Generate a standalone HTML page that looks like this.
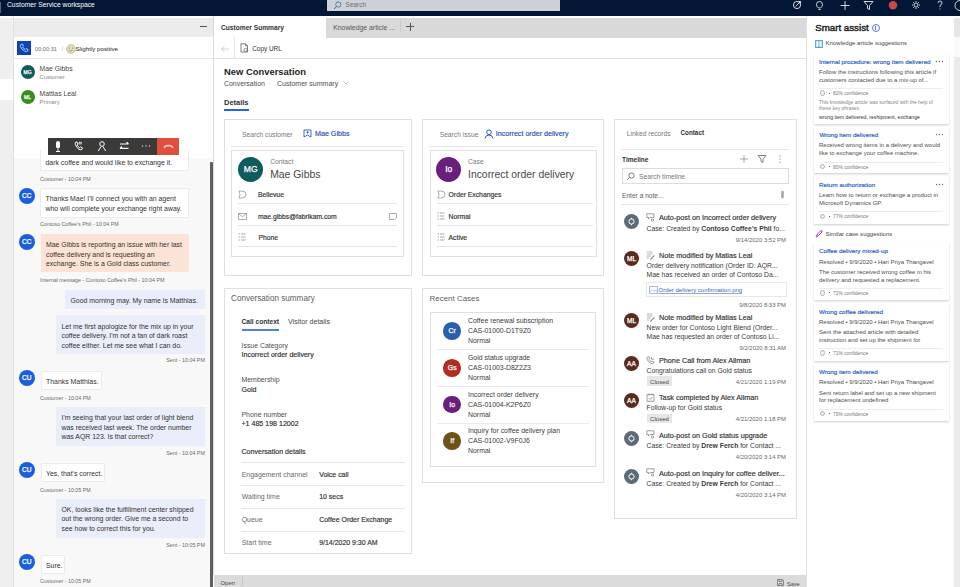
<!DOCTYPE html>
<html><head><meta charset="utf-8">
<style>
*{margin:0;padding:0;box-sizing:border-box}
html,body{width:960px;height:587px;overflow:hidden;background:#fff;font-family:"Liberation Sans",sans-serif;color:#323130;position:relative}
.a{position:absolute}
.t{position:absolute;white-space:nowrap}
.b{font-weight:bold}
.s{-webkit-text-stroke:0.16px currentColor}
.r{border-radius:50%}
.av{position:absolute;border-radius:50%;color:#fff;text-align:center;white-space:nowrap;-webkit-text-stroke:0.25px #fff}
</style></head><body>
<!-- top bar -->
<div class="a" style="left:0px;top:0px;width:960px;height:16px;background:#021635;"></div>
<div class="a" style="left:0px;top:2px;width:1px;height:11px;background:#5a6478;"></div>
<div class="t" style="left:7.00px;top:-0.20px;font-size:6.752px;color:#ffffff;line-height:10px;height:10px;">Customer Service workspace</div>
<div class="a" style="left:327px;top:0px;width:233px;height:11px;background:#cdd1d6;"></div>
<svg class="a" style="left:333px;top:1px" width="9" height="9" viewBox="0 0 9 9"><circle cx="5.3" cy="3.6" r="2.6" fill="none" stroke="#3d64a8" stroke-width="0.8"/><path d="M3.4 5.5 L1 8" stroke="#3d64a8" stroke-width="0.9"/></svg>
<div class="t" style="left:345.60px;top:0.30px;font-size:6.449px;color:#676b72;line-height:10px;height:10px;">Search</div>
<svg class="a" style="left:788px;top:0px" width="172" height="14" viewBox="0 0 172 14"><g fill="none" stroke="#e8ebf0" stroke-width="0.9">
  <circle cx="9" cy="5" r="3.6"/><path d="M7.5 6.5 L12.5 1.5 M10.5 1.5 H12.5 V3.5"/>
  <path d="M30.5 8 Q28.5 6.5 28.5 4.5 Q28.5 1.5 31.5 1.5 Q34.5 1.5 34.5 4.5 Q34.5 6.5 32.5 8Z M30.5 9.5 H32.5"/>
  <path d="M57 1 V10 M52.5 5.5 H61.5"/>
  <path d="M76 1.5 H85 L81.5 5.5 V9.5 L79.5 8.5 V5.5Z"/>
  <circle cx="128" cy="5" r="2"/><path d="M128 1 V2.2 M128 7.8 V9 M124 5 H125.2 M130.8 5 H132 M125.2 2.2 L126 3 M130 7 L130.8 7.8 M125.2 7.8 L126 7 M130 3 L130.8 2.2"/>
  <path d="M150 3 Q150 1 152 1 Q154 1 154 3 Q154 4.5 152 5.5 V7 M152 8.5 V9.5"/>
  <circle cx="172" cy="5.5" r="5"/>
 </g>
 <circle cx="105" cy="5.2" r="4.2" fill="#c94848"/></svg>
<!-- left strip -->
<div class="a" style="left:0px;top:18px;width:13px;height:569px;background:#efefef;"></div>
<div class="a" style="left:0px;top:79px;width:13px;height:21px;background:#ffffff;"></div>
<div class="a" style="left:13px;top:16px;width:1px;height:571px;background:#e0e0e0;"></div>
<!-- left panel -->
<div class="a" style="left:14px;top:18px;width:200px;height:19.5px;background:#ebebeb;"></div>
<div class="a" style="left:14px;top:37px;width:199px;height:121px;background:#ffffff;"></div>
<div class="a" style="left:14px;top:58px;width:199px;height:1px;background:#e9e9e9;"></div>
<div class="a" style="left:14px;top:158px;width:199px;height:429px;background:#f8f8f8;"></div>
<div class="a" style="left:200px;top:26px;width:7px;height:1px;background:#505050;"></div>
<div class="a" style="left:17px;top:41px;width:14px;height:14px;background:#0d45b8;"></div>
<svg class="a" style="left:19px;top:43px" width="10" height="10" viewBox="0 0 10 10"><path d="M2.2 1.2 L3.6 1 L4.4 3 L3.5 3.8 Q4.3 5.6 6.2 6.5 L7 5.6 L9 6.4 L8.8 7.8 Q7.8 9 5.8 8.2 Q2.5 6.6 1.4 3.6 Q1 2 2.2 1.2Z" fill="none" stroke="#dfe8fb" stroke-width="0.8"/></svg>
<div class="t" style="left:35.00px;top:44.20px;font-size:5.656px;color:#6f6d6b;line-height:10px;height:10px;">00:00:31</div>
<div class="a" style="left:62px;top:46px;width:0.8px;height:5px;background:#dedede;"></div>
<svg class="a" style="left:65.5px;top:43.5px" width="10" height="10" viewBox="0 0 10 10"><circle cx="5" cy="5" r="4.3" fill="#e4e0b8" stroke="#b8b27c" stroke-width="0.8"/><circle cx="3.5" cy="4" r="0.6" fill="#7a7550"/><circle cx="6.5" cy="4" r="0.6" fill="#7a7550"/><path d="M3.2 6.2 Q5 7.6 6.8 6.2" fill="none" stroke="#7a7550" stroke-width="0.6"/></svg>
<div class="t" style="left:75.50px;top:44.00px;font-size:6.185px;color:#252423;line-height:10px;height:10px;">Slightly positive</div>
<div class="av" style="left:20.60px;top:65.00px;width:14px;height:14px;background:#0f5b5d;font-size:5px;line-height:14px">MG</div>
<div class="t" style="left:39.60px;top:63.70px;font-size:6.826px;color:#484644;line-height:10px;height:10px;">Mae Gibbs</div>
<div class="t" style="left:39.60px;top:72.00px;font-size:5.800px;color:#8a8886;line-height:10px;height:10px;">Customer</div>
<div class="av" style="left:20.60px;top:89.70px;width:14px;height:14px;background:#3a8c1f;font-size:5px;line-height:14px">ML</div>
<div class="t" style="left:39.60px;top:88.70px;font-size:6.826px;color:#484644;line-height:10px;height:10px;">Mattias Leal</div>
<div class="t" style="left:39.60px;top:96.90px;font-size:5.800px;color:#8a8886;line-height:10px;height:10px;">Primary</div>
<!-- chat -->
<div class="a" style="left:210px;top:162px;width:2.7px;height:425px;background:#606060;border-radius:1.3px 1.3px 0 0"></div>
<div class="a" style="left:40px;top:150px;width:149px;height:21.3px;background:#ffffff;border:1px solid #ebebeb;border-top:none;border-radius:1px"></div>
<div class="t" style="left:45.50px;top:157.70px;font-size:6.927px;color:#323130;line-height:10px;height:10px;">dark coffee and would like to exchange it.</div>
<div class="t" style="left:40.00px;top:173.70px;font-size:5.355px;color:#6b6967;line-height:10px;height:10px;">Customer - 10:04 PM</div>
<div class="a" style="left:40px;top:188px;width:149px;height:29.5px;background:#ffffff;border:1px solid #ebebeb;border-radius:1px"></div>
<div class="t" style="left:45.50px;top:194.40px;font-size:6.927px;color:#323130;line-height:10px;height:10px;">Thanks Mae! I'll connect you with an agent</div>
<div class="t" style="left:45.50px;top:203.70px;font-size:6.927px;color:#323130;line-height:10px;height:10px;">who will complete your exchange right away.</div>
<div class="t" style="left:40.00px;top:219.00px;font-size:5.355px;color:#6b6967;line-height:10px;height:10px;">Contoso Coffee's Phil - 10:04 PM</div>
<div class="av" style="left:18.80px;top:187.80px;width:16px;height:16px;background:#1a5ee0;font-size:6.6px;line-height:16px">CC</div>
<div class="a" style="left:40.5px;top:233.6px;width:148.5px;height:38.7px;background:#fde3d5;border-radius:1px"></div>
<div class="t" style="left:46.00px;top:239.90px;font-size:6.927px;color:#323130;line-height:10px;height:10px;">Mae Gibbs is reporting an issue with her last</div>
<div class="t" style="left:46.00px;top:249.60px;font-size:6.927px;color:#323130;line-height:10px;height:10px;">coffee delivery and is requesting an</div>
<div class="t" style="left:46.00px;top:259.20px;font-size:6.927px;color:#323130;line-height:10px;height:10px;">exchange. She is a Gold class customer.</div>
<div class="t" style="left:40.00px;top:274.90px;font-size:5.355px;color:#6b6967;line-height:10px;height:10px;">Internal message - Contoso Coffee's Phil - 10:04 PM</div>
<div class="av" style="left:18.80px;top:233.50px;width:16px;height:16px;background:#1a5ee0;font-size:6.6px;line-height:16px">CC</div>
<div class="a" style="left:65px;top:289.8px;width:139.5px;height:19.7px;background:#e9eefa;border-radius:1px"></div>
<div class="t" style="left:70.50px;top:295.50px;font-size:6.927px;color:#323130;line-height:10px;height:10px;">Good morning may. My name is Matthias.</div>
<div class="a" style="left:56px;top:315.1px;width:148.5px;height:38.6px;background:#e9eefa;border-radius:1px"></div>
<div class="t" style="left:61.50px;top:321.70px;font-size:6.927px;color:#323130;line-height:10px;height:10px;">Let me first apologize for the mix up in your</div>
<div class="t" style="left:61.50px;top:331.10px;font-size:6.927px;color:#323130;line-height:10px;height:10px;">coffee delivery. I'm not a fan of dark roast</div>
<div class="t" style="left:61.50px;top:340.50px;font-size:6.927px;color:#323130;line-height:10px;height:10px;">coffee either. Let me see what I can do.</div>
<div class="t" style="left:4.90px;width:200px;text-align:right;top:355.30px;font-size:5.355px;color:#6b6967;line-height:10px;height:10px;">Sent - 10:04 PM</div>
<div class="a" style="left:40.5px;top:370.5px;width:61.9px;height:19.7px;background:#ffffff;border:1px solid #ebebeb;border-radius:1px"></div>
<div class="t" style="left:46.00px;top:376.80px;font-size:6.927px;color:#323130;line-height:10px;height:10px;">Thanks Matthias.</div>
<div class="t" style="left:40.00px;top:392.70px;font-size:5.355px;color:#6b6967;line-height:10px;height:10px;">Customer - 10:04 PM</div>
<div class="av" style="left:18.80px;top:370.00px;width:16px;height:16px;background:#1a5ee0;font-size:6.6px;line-height:16px">CU</div>
<div class="a" style="left:56px;top:407px;width:148.5px;height:38.6px;background:#e9eefa;border-radius:1px"></div>
<div class="t" style="left:61.50px;top:413.40px;font-size:6.927px;color:#323130;line-height:10px;height:10px;">I'm seeing that your last order of light blend</div>
<div class="t" style="left:61.50px;top:422.70px;font-size:6.927px;color:#323130;line-height:10px;height:10px;">was received last week. The order number</div>
<div class="t" style="left:61.50px;top:432.20px;font-size:6.927px;color:#323130;line-height:10px;height:10px;">was AQR 123. Is that correct?</div>
<div class="t" style="left:4.90px;width:200px;text-align:right;top:448.20px;font-size:5.355px;color:#6b6967;line-height:10px;height:10px;">Sent - 10:04 PM</div>
<div class="a" style="left:40.5px;top:462.9px;width:64.7px;height:19.1px;background:#ffffff;border:1px solid #ebebeb;border-radius:1px"></div>
<div class="t" style="left:46.00px;top:468.70px;font-size:6.927px;color:#323130;line-height:10px;height:10px;">Yes, that's correct.</div>
<div class="t" style="left:40.00px;top:484.70px;font-size:5.355px;color:#6b6967;line-height:10px;height:10px;">Customer - 10:05 PM</div>
<div class="av" style="left:18.80px;top:462.00px;width:16px;height:16px;background:#1a5ee0;font-size:6.6px;line-height:16px">CU</div>
<div class="a" style="left:56px;top:498.7px;width:148.5px;height:39.1px;background:#e9eefa;border-radius:1px"></div>
<div class="t" style="left:61.50px;top:504.70px;font-size:6.927px;color:#323130;line-height:10px;height:10px;">OK, looks like the fulfillment center shipped</div>
<div class="t" style="left:61.50px;top:514.30px;font-size:6.927px;color:#323130;line-height:10px;height:10px;">out the wrong order. Give me a second to</div>
<div class="t" style="left:61.50px;top:523.70px;font-size:6.927px;color:#323130;line-height:10px;height:10px;">see how to correct this for you.</div>
<div class="t" style="left:4.90px;width:200px;text-align:right;top:539.70px;font-size:5.355px;color:#6b6967;line-height:10px;height:10px;">Sent - 10:05 PM</div>
<div class="a" style="left:40.5px;top:554.7px;width:24.5px;height:19.5px;background:#ffffff;border:1px solid #ebebeb;border-radius:1px"></div>
<div class="t" style="left:46.00px;top:560.70px;font-size:6.927px;color:#323130;line-height:10px;height:10px;">Sure.</div>
<div class="t" style="left:40.00px;top:576.30px;font-size:5.355px;color:#6b6967;line-height:10px;height:10px;">Customer - 10:05 PM</div>
<div class="av" style="left:18.80px;top:554.00px;width:16px;height:16px;background:#1a5ee0;font-size:6.6px;line-height:16px">CU</div>
<!-- call toolbar -->
<div class="a" style="left:48px;top:138px;width:109px;height:16.5px;background:#3b3a39;"></div>
<div class="a" style="left:157px;top:138px;width:22.2px;height:16.5px;background:#e04f3d;"></div>
<svg class="a" style="left:48px;top:138px" width="132" height="16" viewBox="0 0 132 16"><g fill="none" stroke="#fff" stroke-width="1">
  <path d="M10 11 V13.5 M8 13.5 H12"/>
  <path d="M27.5 4.3 L29 4 L30 6.2 L29.1 7 Q29.8 8.8 31.5 9.6 L32.3 8.8 L34.3 9.7 L34.1 11.2 Q33 12.3 31 11.3 Q28.2 9.6 27.3 6.3 Q27.1 5 27.5 4.3Z"/>
  <path d="M31.5 3.5 V6.5 M33 3.5 V6.5 M30.5 4.5 H34 M30.5 5.8 H34" stroke-width="0.5"/>
  <circle cx="54" cy="6" r="2.3"/><path d="M50.3 13 L53 8.6 M57.7 13 L55 8.6"/>
  <path d="M72 6 H80.5 M78.5 4.2 L80.5 6 M72 10.3 H80.5 M74 8.5 L72 10.3" stroke-width="1.2"/>
 </g>
 <rect x="8" y="3" width="4" height="7.5" rx="2" fill="#fff"/>
 <circle cx="94.5" cy="8" r="0.7" fill="#ddd"/><circle cx="98" cy="8" r="0.7" fill="#ddd"/><circle cx="101.5" cy="8" r="0.7" fill="#ddd"/>
 <path d="M115.5 9.8 Q115.5 6.8 120.5 6.8 Q125.5 6.8 125.5 9.8 L123.8 10.3 L123.2 8.8 Q120.5 8.2 117.8 8.8 L117.2 10.3Z" fill="#f5c4bb"/></svg>
<!-- center -->
<div class="a" style="left:213px;top:16px;width:1px;height:559px;background:#d9d9d9;"></div>
<div class="a" style="left:326px;top:17.5px;width:481px;height:20px;background:#d9d9d9;"></div>
<div class="t b" style="left:221.00px;top:23.10px;font-size:6.646px;color:#323130;line-height:10px;height:10px;">Customer Summary</div>
<div class="t" style="left:333.20px;top:23.20px;font-size:6.878px;color:#5a5856;line-height:10px;height:10px;">Knowledge article ...</div>
<div class="a" style="left:400px;top:21px;width:1px;height:11px;background:#cccccc;"></div>
<div class="a" style="left:406px;top:26.2px;width:8px;height:0.8px;background:#555555;"></div>
<div class="a" style="left:409.6px;top:22.5px;width:0.8px;height:8px;background:#555555;"></div>
<div class="a" style="left:214px;top:58px;width:593px;height:1px;background:#e0e0e0;"></div>
<div class="a" style="left:234px;top:37px;width:1px;height:21px;background:#e6e6e6;"></div>
<svg class="a" style="left:220px;top:44.5px" width="10" height="8" viewBox="0 0 10 8"><path d="M9 4 H1.5 M4.5 1 L1.5 4 L4.5 7" fill="none" stroke="#c8c6c4" stroke-width="0.8"/></svg>
<svg class="a" style="left:240px;top:43px" width="9" height="10" viewBox="0 0 9 10"><path d="M1 0.8 H5.5 L7.5 2.8 V9 H1Z M5.5 0.8 V2.8 H7.5" fill="none" stroke="#605e5c" stroke-width="0.8"/><circle cx="5.5" cy="7" r="1.6" fill="#fff" stroke="#605e5c" stroke-width="0.7"/></svg>
<div class="t" style="left:252.20px;top:44.10px;font-size:6.425px;color:#323130;line-height:10px;height:10px;">Copy URL</div>
<div class="t b" style="left:224.00px;top:65.80px;font-size:9.420px;color:#201f1e;line-height:12px;height:12px;">New Conversation</div>
<div class="t" style="left:224.00px;top:78.50px;font-size:6.946px;color:#4f4d4b;line-height:10px;height:10px;">Conversation</div>
<div class="t" style="left:268.50px;top:78.50px;font-size:6.800px;color:#a19f9d;line-height:10px;height:10px;">&middot;</div>
<div class="t" style="left:277.00px;top:78.50px;font-size:7.032px;color:#4f4d4b;line-height:10px;height:10px;">Customer summary</div>
<svg class="a" style="left:342.5px;top:81px" width="6" height="4" viewBox="0 0 6 4"><path d="M0.5 0.5 L3 3 L5.5 0.5" fill="none" stroke="#a19f9d" stroke-width="0.7"/></svg>
<div class="t b" style="left:224.00px;top:98.10px;font-size:7.476px;color:#323130;line-height:10px;height:10px;">Details</div>
<div class="a" style="left:224px;top:108.5px;width:24.5px;height:2px;background:#2266e3;"></div>
<!-- customer card -->
<div class="a" style="left:224px;top:119px;width:188px;height:157px;border:1px solid #e1dfdd;background:#fff;"></div>
<div class="t" style="left:242.00px;top:129.50px;font-size:6.690px;color:#797775;line-height:10px;height:10px;">Search customer</div>
<svg class="a" style="left:303px;top:129px" width="9" height="9" viewBox="0 0 9 9"><path d="M1 1 H8 V8 L4.5 6 L1 8Z" fill="none" stroke="#2b5ac8" stroke-width="0.9"/><circle cx="4.5" cy="3.3" r="1.1" fill="#2b5ac8"/></svg>
<div class="t s" style="left:315.00px;top:129.30px;font-size:7.135px;color:#1f4fb4;line-height:10px;height:10px;">Mae Gibbs</div>
<div class="a" style="left:231px;top:145.5px;width:173px;height:1px;background:#e6e6e6;"></div>
<div class="a" style="left:231px;top:149.5px;width:173px;height:107px;border:1px solid #e1dfdd;background:transparent;"></div>
<div class="av" style="left:238.40px;top:157.10px;width:24.8px;height:24.8px;background:#0f5b5d;font-size:8.6px;line-height:24.8px">MG</div>
<div class="t" style="left:270.20px;top:156.70px;font-size:6.719px;color:#797775;line-height:10px;height:10px;">Contact</div>
<div class="t" style="left:270.20px;top:169.00px;font-size:10.403px;color:#484644;line-height:12px;height:12px;">Mae Gibbs</div>
<svg class="a" style="left:238px;top:190px" width="9" height="9" viewBox="0 0 9 9"><path d="M1 1 H4 Q8 1 8 4.5 Q8 8 4 8 H1 M1 1 Q3 4.5 1 8" fill="none" stroke="#8a8886" stroke-width="0.7"/></svg>
<div class="t s" style="left:257.90px;top:190.20px;font-size:6.795px;color:#323130;line-height:10px;height:10px;">Bellevue</div>
<div class="a" style="left:238px;top:202.5px;width:159px;height:1px;background:#e6e6e6;"></div>
<svg class="a" style="left:238px;top:212.5px" width="9" height="7" viewBox="0 0 9 7"><path d="M0.5 0.5 H8.5 V6.5 H0.5Z M0.5 0.5 L4.5 3.8 L8.5 0.5" fill="none" stroke="#8a8886" stroke-width="0.7"/></svg>
<div class="t s" style="left:257.90px;top:211.70px;font-size:6.795px;color:#323130;line-height:10px;height:10px;">mae.gibbs@fabrikam.com</div>
<svg class="a" style="left:389px;top:212.5px" width="8" height="7" viewBox="0 0 8 7"><path d="M0.5 0.5 H7.5 V4.5 L5 6.5 H0.5Z" fill="none" stroke="#8a8886" stroke-width="0.7"/></svg>
<div class="a" style="left:238px;top:224.5px;width:159px;height:1px;background:#e6e6e6;"></div>
<svg class="a" style="left:238px;top:233px" width="8" height="8" viewBox="0 0 8 8"><path d="M0.5 1 H2 M3 1 H7.5 M0.5 4 H2 M3 4 H7.5 M0.5 7 H2 M3 7 H6" fill="none" stroke="#8a8886" stroke-width="0.7"/><path d="M5.5 6.5 L6.5 7.5 L7.8 5.8" fill="none" stroke="#8a8886" stroke-width="0.6"/></svg>
<div class="t s" style="left:258.50px;top:233.20px;font-size:6.795px;color:#323130;line-height:10px;height:10px;">Phone</div>
<div class="a" style="left:238px;top:245.5px;width:159px;height:1px;background:#e6e6e6;"></div>
<!-- issue card -->
<div class="a" style="left:422px;top:119px;width:182px;height:157px;border:1px solid #e1dfdd;background:#fff;"></div>
<div class="t" style="left:439.70px;top:129.50px;font-size:6.690px;color:#797775;line-height:10px;height:10px;">Search issue</div>
<svg class="a" style="left:483.5px;top:128.5px" width="10" height="10" viewBox="0 0 10 10"><circle cx="5" cy="3.3" r="2.3" fill="none" stroke="#2b5ac8" stroke-width="1"/><path d="M1 9.5 Q1.5 6 5 6 Q8.5 6 9 9.5" fill="none" stroke="#2b5ac8" stroke-width="1"/></svg>
<div class="t s" style="left:495.70px;top:129.10px;font-size:7.135px;color:#1f4fb4;line-height:10px;height:10px;">Incorrect order delivery</div>
<div class="a" style="left:429px;top:145.5px;width:167px;height:1px;background:#e6e6e6;"></div>
<div class="a" style="left:429.5px;top:149.5px;width:167px;height:107px;border:1px solid #e1dfdd;background:transparent;"></div>
<div class="av" style="left:436.40px;top:157.00px;width:24.8px;height:24.8px;background:#6b1f7c;font-size:8.4px;line-height:24.8px">Io</div>
<div class="t" style="left:468.00px;top:156.60px;font-size:6.719px;color:#797775;line-height:10px;height:10px;">Case</div>
<div class="t" style="left:468.00px;top:169.00px;font-size:10.403px;color:#484644;line-height:12px;height:12px;">Incorrect order delivery</div>
<svg class="a" style="left:436.5px;top:190px" width="9" height="9" viewBox="0 0 9 9"><path d="M1 1 H4 Q8 1 8 4.5 Q8 8 4 8 H1 M1 1 Q3 4.5 1 8" fill="none" stroke="#8a8886" stroke-width="0.7"/></svg>
<div class="t s" style="left:448.60px;top:190.20px;font-size:6.795px;color:#323130;line-height:10px;height:10px;">Order Exchanges</div>
<div class="a" style="left:436.5px;top:202.5px;width:156.5px;height:1px;background:#e6e6e6;"></div>
<svg class="a" style="left:436.5px;top:212px" width="8" height="8" viewBox="0 0 8 8"><path d="M0.5 1 H2 M3 1 H7.5 M0.5 4 H2 M3 4 H7.5 M0.5 7 H2 M3 7 H6" fill="none" stroke="#8a8886" stroke-width="0.7"/><path d="M5.5 6.5 L6.5 7.5 L7.8 5.8" fill="none" stroke="#8a8886" stroke-width="0.6"/></svg>
<div class="t s" style="left:448.60px;top:211.90px;font-size:6.795px;color:#323130;line-height:10px;height:10px;">Normal</div>
<div class="a" style="left:436.5px;top:224.5px;width:156.5px;height:1px;background:#e6e6e6;"></div>
<svg class="a" style="left:436.5px;top:233px" width="8" height="8" viewBox="0 0 8 8"><path d="M0.5 1 H2 M3 1 H7.5 M0.5 4 H2 M3 4 H7.5 M0.5 7 H2 M3 7 H6" fill="none" stroke="#8a8886" stroke-width="0.7"/><path d="M5.5 6.5 L6.5 7.5 L7.8 5.8" fill="none" stroke="#8a8886" stroke-width="0.6"/></svg>
<div class="t s" style="left:448.60px;top:233.20px;font-size:6.795px;color:#323130;line-height:10px;height:10px;">Active</div>
<div class="a" style="left:436.5px;top:245.5px;width:156.5px;height:1px;background:#e6e6e6;"></div>
<!-- conversation summary -->
<div class="a" style="left:224px;top:288px;width:188px;height:266px;border:1px solid #e1dfdd;background:#fff;"></div>
<div class="t" style="left:231.00px;top:293.70px;font-size:8.152px;color:#605e5c;line-height:10px;height:10px;">Conversation summary</div>
<div class="t b" style="left:241.50px;top:316.70px;font-size:6.630px;color:#323130;line-height:10px;height:10px;">Call context</div>
<div class="a" style="left:241.5px;top:329px;width:37.5px;height:1.5px;background:#4f7fd6;"></div>
<div class="t" style="left:288.00px;top:316.70px;font-size:7.097px;color:#484644;line-height:10px;height:10px;">Visitor details</div>
<div class="t" style="left:241.50px;top:340.70px;font-size:6.933px;color:#4f4d4b;line-height:10px;height:10px;">Issue Category</div>
<div class="t s" style="left:241.50px;top:350.20px;font-size:7.073px;color:#323130;line-height:10px;height:10px;">Incorrect order delivery</div>
<div class="t" style="left:241.50px;top:375.40px;font-size:6.933px;color:#4f4d4b;line-height:10px;height:10px;">Membership</div>
<div class="t s" style="left:241.50px;top:384.70px;font-size:7.073px;color:#323130;line-height:10px;height:10px;">Gold</div>
<div class="t" style="left:241.50px;top:410.10px;font-size:6.933px;color:#4f4d4b;line-height:10px;height:10px;">Phone number</div>
<div class="t s" style="left:241.50px;top:419.40px;font-size:7.073px;color:#323130;line-height:10px;height:10px;">+1 485 198 12002</div>
<div class="t s" style="left:241.50px;top:447.40px;font-size:7.073px;color:#323130;line-height:10px;height:10px;">Conversation details</div>
<div class="a" style="left:241px;top:462.3px;width:164px;height:1px;background:#e6e6e6;"></div>
<div class="t" style="left:241.70px;top:469.50px;font-size:6.971px;color:#6b6967;line-height:10px;height:10px;">Engagement channel</div>
<div class="t s" style="left:319.20px;top:469.50px;font-size:6.965px;color:#323130;line-height:10px;height:10px;">Voice call</div>
<div class="a" style="left:241px;top:485.1px;width:164px;height:1px;background:#e6e6e6;"></div>
<div class="t" style="left:241.70px;top:492.30px;font-size:6.971px;color:#6b6967;line-height:10px;height:10px;">Waiting time</div>
<div class="t s" style="left:319.20px;top:492.30px;font-size:6.965px;color:#323130;line-height:10px;height:10px;">10 secs</div>
<div class="a" style="left:241px;top:507.9px;width:164px;height:1px;background:#e6e6e6;"></div>
<div class="t" style="left:241.70px;top:515.10px;font-size:6.971px;color:#6b6967;line-height:10px;height:10px;">Queue</div>
<div class="t s" style="left:319.20px;top:515.10px;font-size:6.965px;color:#323130;line-height:10px;height:10px;">Coffee Order Exchange</div>
<div class="a" style="left:241px;top:530.9px;width:164px;height:1px;background:#e6e6e6;"></div>
<div class="t" style="left:241.70px;top:538.10px;font-size:6.971px;color:#6b6967;line-height:10px;height:10px;">Start time</div>
<div class="t s" style="left:319.20px;top:538.10px;font-size:6.965px;color:#323130;line-height:10px;height:10px;">9/14/2020 9:30 AM</div>
<!-- recent cases -->
<div class="a" style="left:422px;top:288px;width:182px;height:195px;border:1px solid #e1dfdd;background:#fff;"></div>
<div class="t" style="left:429.60px;top:293.70px;font-size:7.958px;color:#605e5c;line-height:10px;height:10px;">Recent Cases</div>
<div class="a" style="left:429.6px;top:311.7px;width:166.5px;height:155px;border:1px solid #e1dfdd;background:transparent;"></div>
<div class="av" style="left:443.40px;top:322.00px;width:17.6px;height:17.6px;background:#2b5fad;font-size:6.9px;line-height:17.6px">Cr</div>
<div class="t" style="left:468.00px;top:316.20px;font-size:6.913px;color:#3b3a39;line-height:10px;height:10px;">Coffee renewal subscription</div>
<div class="t" style="left:468.00px;top:326.00px;font-size:6.913px;color:#3b3a39;line-height:10px;height:10px;">CAS-01000-D1T9Z0</div>
<div class="t" style="left:468.00px;top:335.70px;font-size:6.913px;color:#3b3a39;line-height:10px;height:10px;">Normal</div>
<div class="a" style="left:437px;top:349.0px;width:152px;height:1px;background:#ebebeb;"></div>
<div class="av" style="left:443.40px;top:359.20px;width:17.6px;height:17.6px;background:#b02d20;font-size:6.9px;line-height:17.6px">Gs</div>
<div class="t" style="left:468.00px;top:353.40px;font-size:6.913px;color:#3b3a39;line-height:10px;height:10px;">Gold status upgrade</div>
<div class="t" style="left:468.00px;top:363.20px;font-size:6.913px;color:#3b3a39;line-height:10px;height:10px;">CAS-01003-D8Z2Z3</div>
<div class="t" style="left:468.00px;top:372.90px;font-size:6.913px;color:#3b3a39;line-height:10px;height:10px;">Normal</div>
<div class="a" style="left:437px;top:386.2px;width:152px;height:1px;background:#ebebeb;"></div>
<div class="av" style="left:443.40px;top:395.80px;width:17.6px;height:17.6px;background:#6b1f7c;font-size:6.9px;line-height:17.6px">Io</div>
<div class="t" style="left:468.00px;top:390.00px;font-size:6.913px;color:#3b3a39;line-height:10px;height:10px;">Incorrect order delivery</div>
<div class="t" style="left:468.00px;top:399.80px;font-size:6.913px;color:#3b3a39;line-height:10px;height:10px;">CAS-01004-K2P6Z0</div>
<div class="t" style="left:468.00px;top:409.50px;font-size:6.913px;color:#3b3a39;line-height:10px;height:10px;">Normal</div>
<div class="a" style="left:437px;top:422.8px;width:152px;height:1px;background:#ebebeb;"></div>
<div class="av" style="left:443.40px;top:432.00px;width:17.6px;height:17.6px;background:#6b5418;font-size:6.9px;line-height:17.6px">If</div>
<div class="t" style="left:468.00px;top:426.20px;font-size:6.913px;color:#3b3a39;line-height:10px;height:10px;">Inquiry for coffee delivery plan</div>
<div class="t" style="left:468.00px;top:436.00px;font-size:6.913px;color:#3b3a39;line-height:10px;height:10px;">CAS-01002-V9F0J6</div>
<div class="t" style="left:468.00px;top:445.70px;font-size:6.913px;color:#3b3a39;line-height:10px;height:10px;">Normal</div>
<!-- timeline -->
<div class="a" style="left:614px;top:119px;width:182.5px;height:399.5px;border:1px solid #e1dfdd;background:#fff;"></div>
<div class="t" style="left:626.70px;top:128.70px;font-size:6.690px;color:#797775;line-height:10px;height:10px;">Linked records</div>
<div class="t b" style="left:680.50px;top:128.20px;font-size:6.325px;color:#323130;line-height:10px;height:10px;">Contact</div>
<div class="a" style="left:621px;top:149px;width:168px;height:1px;background:#e6e6e6;"></div>
<div class="t b" style="left:622.00px;top:154.70px;font-size:6.567px;color:#323130;line-height:10px;height:10px;">Timeline</div>
<svg class="a" style="left:739px;top:154px" width="50" height="10" viewBox="0 0 50 10"><path d="M5 1 V9 M1 5 H9" stroke="#707070" stroke-width="0.6"/><path d="M19 1.5 H27 L24 5 V8.5 L22 7.5 V5Z" fill="none" stroke="#605e5c" stroke-width="0.8"/><circle cx="41" cy="2" r="0.6" fill="#605e5c"/><circle cx="41" cy="5" r="0.6" fill="#605e5c"/><circle cx="41" cy="8" r="0.6" fill="#605e5c"/></svg>
<div class="a" style="left:621.5px;top:168px;width:167px;height:15.6px;border:1px solid #dcdcdc;background:transparent;"></div>
<svg class="a" style="left:626px;top:171.5px" width="9" height="9" viewBox="0 0 9 9"><circle cx="5.5" cy="3.5" r="2.6" fill="none" stroke="#605e5c" stroke-width="0.8"/><path d="M3.6 5.4 L1 8" stroke="#605e5c" stroke-width="0.8"/></svg>
<div class="t" style="left:639.00px;top:171.70px;font-size:6.690px;color:#797775;line-height:10px;height:10px;">Search timeline</div>
<div class="t" style="left:622.00px;top:190.70px;font-size:6.619px;color:#605e5c;line-height:10px;height:10px;">Enter a note...</div>
<svg class="a" style="left:780px;top:189.5px" width="5" height="10" viewBox="0 0 5 10"><rect x="1.2" y="0.8" width="2.6" height="7.6" rx="1.3" fill="#a8a8a8"/></svg>
<div class="a" style="left:621px;top:203.5px;width:168px;height:1px;background:#e6e6e6;"></div>
<div class="a r" style="left:624.0px;top:213.80px;width:15px;height:15px;background:#5d6b78"></div>
<svg class="a" style="left:627px;top:216.8px" width="9" height="9" viewBox="0 0 9 9"><circle cx="4.5" cy="4.5" r="2.6" fill="none" stroke="#fff" stroke-width="1"/><path d="M4.5 0.8 V2 M4.5 7 V8.2" stroke="#fff" stroke-width="0.9"/></svg>
<svg class="a" style="left:646px;top:213.0px" width="9" height="9" viewBox="0 0 9 9"><path d="M0.8 0.8 H8 V4.5 H4 L2.5 6 V4.5 H0.8Z" fill="none" stroke="#797775" stroke-width="0.7"/><circle cx="6.5" cy="7" r="1.2" fill="none" stroke="#797775" stroke-width="0.7"/></svg>
<div class="t s" style="left:659.00px;top:213.20px;font-size:7.243px;color:#323130;line-height:10px;height:10px;">Auto-post on Incorrect order delivery</div>
<div class="t" style="left:646.50px;top:223.70px;font-size:6.818px;color:#3b3a39;line-height:10px;height:10px;">Case: Created by <b>Contoso Coffee's Phil</b> fo...</div>
<div class="t" style="left:586.00px;width:200px;text-align:right;top:234.70px;font-size:5.957px;color:#696765;line-height:10px;height:10px;">9/14/2020 3:52 PM</div>
<div class="av" style="left:624.00px;top:251.30px;width:15px;height:15px;background:#5b2a1e;font-size:6.6px;line-height:15px">ML</div>
<svg class="a" style="left:646px;top:250.9px" width="9" height="9" viewBox="0 0 9 9"><path d="M0.8 1 H6.5 M0.8 3 H6.5 M0.8 5 H5 M0.8 7 H3.2" fill="none" stroke="#9a9896" stroke-width="0.7"/><path d="M4.2 8.6 L8.4 4.4" fill="none" stroke="#8a8886" stroke-width="1.1"/></svg>
<div class="t s" style="left:659.00px;top:251.10px;font-size:7.243px;color:#323130;line-height:10px;height:10px;">Note modified by Matias Leal</div>
<div class="t" style="left:646.50px;top:261.20px;font-size:6.818px;color:#3b3a39;line-height:10px;height:10px;">Order delivery notification (Order ID: AQR...</div>
<div class="t" style="left:646.50px;top:270.40px;font-size:6.818px;color:#3b3a39;line-height:10px;height:10px;">Mae has received an order of Contoso Da...</div>
<div class="a" style="left:646px;top:282px;width:141px;height:15px;border:1px solid #e8e8e8;background:transparent;"></div>
<svg class="a" style="left:649px;top:285.5px" width="9" height="8" viewBox="0 0 9 8"><path d="M0.5 0.5 H8.5 V7.5 H0.5Z M0.5 6 L3 3.5 L5 5.5 L6.5 4 L8.5 6" fill="none" stroke="#6f8fc8" stroke-width="0.6"/></svg>
<div class="t" style="left:658.50px;top:285.20px;font-size:6.000px;color:#3767b8;line-height:10px;height:10px;text-decoration:underline;text-decoration-color:#8fa9d8;text-decoration-thickness:0.5px">Order delivery confirmation.png</div>
<div class="t" style="left:586.00px;width:200px;text-align:right;top:300.30px;font-size:5.957px;color:#696765;line-height:10px;height:10px;">9/8/2020 8:33 PM</div>
<div class="av" style="left:624.00px;top:312.90px;width:15px;height:15px;background:#5b2a1e;font-size:6.6px;line-height:15px">ML</div>
<svg class="a" style="left:646px;top:312.5px" width="9" height="9" viewBox="0 0 9 9"><path d="M0.8 1 H6.5 M0.8 3 H6.5 M0.8 5 H5 M0.8 7 H3.2" fill="none" stroke="#9a9896" stroke-width="0.7"/><path d="M4.2 8.6 L8.4 4.4" fill="none" stroke="#8a8886" stroke-width="1.1"/></svg>
<div class="t s" style="left:659.00px;top:312.70px;font-size:7.243px;color:#323130;line-height:10px;height:10px;">Note modified by Matias Leal</div>
<div class="t" style="left:646.50px;top:323.20px;font-size:6.818px;color:#3b3a39;line-height:10px;height:10px;">New order for Contoso Light Blend (Order...</div>
<div class="t" style="left:646.50px;top:332.20px;font-size:6.818px;color:#3b3a39;line-height:10px;height:10px;">Mae has requested an order of Contoso Li...</div>
<div class="t" style="left:586.00px;width:200px;text-align:right;top:343.20px;font-size:5.957px;color:#696765;line-height:10px;height:10px;">9/2/2020 8:31 AM</div>
<div class="av" style="left:624.00px;top:356.00px;width:15px;height:15px;background:#5b2a1e;font-size:6.6px;line-height:15px">AA</div>
<svg class="a" style="left:646px;top:355.5px" width="9" height="9" viewBox="0 0 9 9"><path d="M1.5 1 L3 0.8 L3.7 2.7 L2.9 3.4 Q3.6 5 5.2 5.8 L6 5 L7.8 5.7 L7.6 7.2 Q6.6 8.2 4.8 7.4 Q2 6 1 3 Q0.8 1.8 1.5 1Z M5.5 0.8 V3.2 H8" fill="none" stroke="#797775" stroke-width="0.7"/></svg>
<div class="t s" style="left:659.00px;top:355.70px;font-size:7.243px;color:#323130;line-height:10px;height:10px;">Phone Call from Alex Allman</div>
<div class="t" style="left:646.50px;top:365.70px;font-size:6.818px;color:#3b3a39;line-height:10px;height:10px;">Congratulations call on Gold status</div>
<div class="a" style="left:646.8px;top:376.3px;width:25.3px;height:9.5px;background:#e6e6e6;"></div>
<div class="t" style="left:650.00px;top:376.70px;font-size:6.100px;color:#484644;line-height:10px;height:10px;">Closed</div>
<div class="t" style="left:586.00px;width:200px;text-align:right;top:376.70px;font-size:5.957px;color:#696765;line-height:10px;height:10px;">4/21/2020 1:19 PM</div>
<div class="av" style="left:624.00px;top:393.30px;width:15px;height:15px;background:#5b2a1e;font-size:6.6px;line-height:15px">AA</div>
<svg class="a" style="left:646px;top:393.0px" width="9" height="9" viewBox="0 0 9 9"><path d="M1 1.5 H8 V8.3 H1Z M3 0.5 V2.5 M6 0.5 V2.5 M2.8 5.3 L4 6.5 L6.3 4" fill="none" stroke="#797775" stroke-width="0.7"/></svg>
<div class="t s" style="left:659.00px;top:393.20px;font-size:7.243px;color:#323130;line-height:10px;height:10px;">Task completed by Alex Allman</div>
<div class="t" style="left:646.50px;top:402.70px;font-size:6.818px;color:#3b3a39;line-height:10px;height:10px;">Follow-up for Gold status</div>
<div class="a" style="left:646.8px;top:413.8px;width:25.3px;height:9.5px;background:#e6e6e6;"></div>
<div class="t" style="left:650.00px;top:414.20px;font-size:6.100px;color:#484644;line-height:10px;height:10px;">Closed</div>
<div class="t" style="left:586.00px;width:200px;text-align:right;top:414.20px;font-size:5.957px;color:#696765;line-height:10px;height:10px;">4/21/2020 1:18 PM</div>
<div class="a r" style="left:624.0px;top:431.00px;width:15px;height:15px;background:#5d6b78"></div>
<svg class="a" style="left:627px;top:434.0px" width="9" height="9" viewBox="0 0 9 9"><circle cx="4.5" cy="4.5" r="2.6" fill="none" stroke="#fff" stroke-width="1"/><path d="M4.5 0.8 V2 M4.5 7 V8.2" stroke="#fff" stroke-width="0.9"/></svg>
<svg class="a" style="left:646px;top:430.3px" width="9" height="9" viewBox="0 0 9 9"><path d="M0.8 0.8 H8 V4.5 H4 L2.5 6 V4.5 H0.8Z" fill="none" stroke="#797775" stroke-width="0.7"/><circle cx="6.5" cy="7" r="1.2" fill="none" stroke="#797775" stroke-width="0.7"/></svg>
<div class="t s" style="left:659.00px;top:430.50px;font-size:7.243px;color:#323130;line-height:10px;height:10px;">Auto-post on Gold status upgrade</div>
<div class="t" style="left:646.50px;top:441.30px;font-size:6.818px;color:#3b3a39;line-height:10px;height:10px;">Case: Created by <b>Drew Ferch</b> for Contact ...</div>
<div class="t" style="left:586.00px;width:200px;text-align:right;top:452.00px;font-size:5.957px;color:#696765;line-height:10px;height:10px;">4/20/2020 3:14 PM</div>
<div class="a r" style="left:624.0px;top:468.50px;width:15px;height:15px;background:#5d6b78"></div>
<svg class="a" style="left:627px;top:471.5px" width="9" height="9" viewBox="0 0 9 9"><circle cx="4.5" cy="4.5" r="2.6" fill="none" stroke="#fff" stroke-width="1"/><path d="M4.5 0.8 V2 M4.5 7 V8.2" stroke="#fff" stroke-width="0.9"/></svg>
<svg class="a" style="left:646px;top:468.4px" width="9" height="9" viewBox="0 0 9 9"><path d="M0.8 0.8 H8 V4.5 H4 L2.5 6 V4.5 H0.8Z" fill="none" stroke="#797775" stroke-width="0.7"/><circle cx="6.5" cy="7" r="1.2" fill="none" stroke="#797775" stroke-width="0.7"/></svg>
<div class="t s" style="left:659.00px;top:468.60px;font-size:7.243px;color:#323130;line-height:10px;height:10px;">Auto-post on Inquiry for coffee deliver...</div>
<div class="t" style="left:646.50px;top:479.20px;font-size:6.818px;color:#3b3a39;line-height:10px;height:10px;">Case: Created by <b>Drew Ferch</b> for Contact ...</div>
<div class="t" style="left:586.00px;width:200px;text-align:right;top:489.70px;font-size:5.957px;color:#696765;line-height:10px;height:10px;">4/20/2020 3:14 PM</div>
<!-- bottom bar -->
<div class="a" style="left:214px;top:575.3px;width:593px;height:11.7px;background:#dbdbdb;"></div>
<div class="t" style="left:220.50px;top:578.40px;font-size:5.933px;color:#484644;line-height:10px;height:10px;">Open</div>
<div class="a" style="left:242px;top:577px;width:0.8px;height:9px;background:#c4c4c4;"></div>
<svg class="a" style="left:776.5px;top:579px" width="7" height="7" viewBox="0 0 7 7"><path d="M0.5 0.5 H5.5 L6.5 1.5 V6.5 H0.5Z M2 0.5 V2.5 H5 V0.5 M2 6.5 V4.5 H5 V6.5" fill="none" stroke="#605e5c" stroke-width="0.7"/></svg>
<div class="t" style="left:787.00px;top:578.70px;font-size:5.538px;color:#484644;line-height:10px;height:10px;">Save</div>
<!-- smart assist -->
<div class="a" style="left:806px;top:16px;width:1px;height:571px;background:#e1e1e1;"></div>
<div class="a" style="left:954px;top:18px;width:6px;height:19px;background:#e6e6e6;"></div>
<div class="a" style="left:954px;top:37px;width:6px;height:20px;background:#fafafa;"></div>
<div class="a" style="left:954px;top:57px;width:6px;height:530px;background:#ebebeb;"></div>
<div class="t s" style="left:815.30px;top:22.20px;font-size:9.718px;color:#252423;line-height:12px;height:12px;-webkit-text-stroke:0.45px #252423">Smart assist</div>
<div class="a r" style="left:871.8px;top:24px;width:8px;height:8px;border:0.8px solid #4c7ad8"></div>
<div class="a" style="left:875.4px;top:27px;width:0.8px;height:3px;background:#4c7ad8;"></div>
<div class="a" style="left:875.4px;top:25.6px;width:0.8px;height:0.8px;background:#4c7ad8;"></div>
<svg class="a" style="left:815px;top:40px" width="8" height="8" viewBox="0 0 8 8"><rect x="0" y="0" width="8" height="8" fill="#56b0cc"/><rect x="1.3" y="1.2" width="2.2" height="5.6" fill="#fff"/><rect x="4.5" y="1.2" width="2.2" height="5.6" fill="#fff"/><circle cx="4" cy="7.2" r="0.5" fill="#1f4fb4"/></svg>
<div class="t" style="left:825.60px;top:38.40px;font-size:6.045px;color:#484644;line-height:10px;height:10px;">Knowledge article suggestions</div>
<div class="a" style="left:813.5px;top:53.5px;width:135px;height:70.20px;background:#fff;box-shadow:0 0.5px 2px rgba(0,0,0,0.2)"></div>
<div class="t s" style="left:819.00px;top:56.50px;font-size:6.246px;color:#2a5bc9;line-height:10px;height:10px;">Internal procedure: wrong item delivered</div>
<svg class="a" style="left:935px;top:60.0px" width="10" height="3" viewBox="0 0 10 3"><circle cx="1.5" cy="1.5" r="0.7" fill="#6b6967"/><circle cx="4.5" cy="1.5" r="0.7" fill="#6b6967"/><circle cx="7.5" cy="1.5" r="0.7" fill="#6b6967"/></svg>
<div class="t" style="left:819.00px;top:67.00px;font-size:5.971px;color:#504e4c;line-height:10px;height:10px;">Follow the instructions following this article if</div>
<div class="t" style="left:819.00px;top:75.00px;font-size:5.971px;color:#504e4c;line-height:10px;height:10px;">customers contacted due to a mix-up of...</div>
<div class="a" style="left:819px;top:88.2px;width:124px;height:1px;background:#ededed;"></div>
<div class="a r" style="left:819.5px;top:90.40px;width:5.5px;height:5.5px;border:0.6px solid #b5b3b1;background:#f0f0f0"></div>
<div class="a" style="left:828.5px;top:92.5px;width:1px;height:1px;background:#605e5c;"></div>
<div class="t" style="left:833.00px;top:88.20px;font-size:4.980px;color:#797775;line-height:10px;height:10px;">82% confidence</div>
<div class="t" style="left:819.00px;top:97.50px;font-size:4.941px;color:#8a8886;line-height:10px;height:10px;">This knowledge article was surfaced with the help of</div>
<div class="t" style="left:819.00px;top:103.70px;font-size:4.941px;color:#8a8886;line-height:10px;height:10px;">these key phrases</div>
<div class="t" style="left:819.00px;top:112.00px;font-size:5.155px;color:#323130;line-height:10px;height:10px;">wrong item delivered, reshipment, exchange</div>
<div class="a" style="left:813.5px;top:126.5px;width:135px;height:46.50px;background:#fff;box-shadow:0 0.5px 2px rgba(0,0,0,0.2)"></div>
<div class="t s" style="left:819.40px;top:129.60px;font-size:6.246px;color:#2a5bc9;line-height:10px;height:10px;">Wrong item delivered</div>
<svg class="a" style="left:935px;top:133.1px" width="10" height="3" viewBox="0 0 10 3"><circle cx="1.5" cy="1.5" r="0.7" fill="#6b6967"/><circle cx="4.5" cy="1.5" r="0.7" fill="#6b6967"/><circle cx="7.5" cy="1.5" r="0.7" fill="#6b6967"/></svg>
<div class="t" style="left:819.00px;top:140.00px;font-size:5.971px;color:#504e4c;line-height:10px;height:10px;">Received wrong items in a delivery and would</div>
<div class="t" style="left:819.00px;top:148.00px;font-size:5.971px;color:#504e4c;line-height:10px;height:10px;">like to exchange your coffee machine.</div>
<div class="a" style="left:819px;top:161.5px;width:124px;height:1px;background:#ededed;"></div>
<div class="a r" style="left:819.5px;top:163.70px;width:5.5px;height:5.5px;border:0.6px solid #b5b3b1;background:#f0f0f0"></div>
<div class="a" style="left:828.5px;top:165.8px;width:1px;height:1px;background:#605e5c;"></div>
<div class="t" style="left:833.00px;top:161.50px;font-size:4.980px;color:#797775;line-height:10px;height:10px;">80% confidence</div>
<div class="a" style="left:813.5px;top:176px;width:135px;height:47.50px;background:#fff;box-shadow:0 0.5px 2px rgba(0,0,0,0.2)"></div>
<div class="t s" style="left:819.00px;top:179.60px;font-size:6.246px;color:#2a5bc9;line-height:10px;height:10px;">Return authorization</div>
<svg class="a" style="left:935px;top:183.1px" width="10" height="3" viewBox="0 0 10 3"><circle cx="1.5" cy="1.5" r="0.7" fill="#6b6967"/><circle cx="4.5" cy="1.5" r="0.7" fill="#6b6967"/><circle cx="7.5" cy="1.5" r="0.7" fill="#6b6967"/></svg>
<div class="t" style="left:819.00px;top:190.00px;font-size:5.971px;color:#504e4c;line-height:10px;height:10px;">Learn how to return or exchange a product in</div>
<div class="t" style="left:819.00px;top:197.70px;font-size:5.971px;color:#504e4c;line-height:10px;height:10px;">Microsoft Dynamics GP.</div>
<div class="a" style="left:819px;top:211.3px;width:124px;height:1px;background:#ededed;"></div>
<div class="a r" style="left:819.5px;top:213.50px;width:5.5px;height:5.5px;border:0.6px solid #b5b3b1;background:#f0f0f0"></div>
<div class="a" style="left:828.5px;top:215.60000000000002px;width:1px;height:1px;background:#605e5c;"></div>
<div class="t" style="left:833.00px;top:211.30px;font-size:4.980px;color:#797775;line-height:10px;height:10px;">77% confidence</div>
<svg class="a" style="left:815px;top:229px" width="8" height="9" viewBox="0 0 8 9"><path d="M1 8 L2.5 5 L6 1.5 Q7.5 1.5 7 3 L3.5 6.5Z" fill="none" stroke="#a33fb0" stroke-width="1"/></svg>
<div class="t" style="left:825.60px;top:228.70px;font-size:6.045px;color:#484644;line-height:10px;height:10px;">Similar case suggestions</div>
<div class="a" style="left:813.5px;top:242.7px;width:135px;height:57.30px;background:#fff;box-shadow:0 0.5px 2px rgba(0,0,0,0.2)"></div>
<div class="t s" style="left:819.00px;top:246.00px;font-size:6.246px;color:#2a5bc9;line-height:10px;height:10px;">Coffee delivery mixed-up</div>
<div class="t" style="left:819.00px;top:257.00px;font-size:5.971px;color:#504e4c;line-height:10px;height:10px;">Resolved &bull; 9/9/2020 &bull; Hari Priya Thangavel</div>
<div class="t" style="left:819.00px;top:266.80px;font-size:5.971px;color:#504e4c;line-height:10px;height:10px;">The customer received wrong coffee in his</div>
<div class="t" style="left:819.00px;top:274.50px;font-size:5.971px;color:#504e4c;line-height:10px;height:10px;">delivery and requested a replacement.</div>
<div class="a" style="left:819px;top:288px;width:124px;height:1px;background:#ededed;"></div>
<div class="a r" style="left:819.5px;top:290.20px;width:5.5px;height:5.5px;border:0.6px solid #b5b3b1;background:#f0f0f0"></div>
<div class="a" style="left:828.5px;top:292.3px;width:1px;height:1px;background:#605e5c;"></div>
<div class="t" style="left:833.00px;top:288.00px;font-size:4.980px;color:#797775;line-height:10px;height:10px;">72% confidence</div>
<div class="a" style="left:813.5px;top:302.5px;width:135px;height:58.50px;background:#fff;box-shadow:0 0.5px 2px rgba(0,0,0,0.2)"></div>
<div class="t s" style="left:819.00px;top:306.70px;font-size:6.246px;color:#2a5bc9;line-height:10px;height:10px;">Wrong coffee delivered</div>
<div class="t" style="left:819.00px;top:316.50px;font-size:5.971px;color:#504e4c;line-height:10px;height:10px;">Resolved &bull; 9/9/2020 &bull; Hari Priya Thangavel</div>
<div class="t" style="left:819.00px;top:327.00px;font-size:5.971px;color:#504e4c;line-height:10px;height:10px;">Sent the attached article with detailed</div>
<div class="t" style="left:819.00px;top:334.70px;font-size:5.971px;color:#504e4c;line-height:10px;height:10px;">instruction and set up the shipment for</div>
<div class="a" style="left:819px;top:348px;width:124px;height:1px;background:#ededed;"></div>
<div class="a r" style="left:819.5px;top:350.20px;width:5.5px;height:5.5px;border:0.6px solid #b5b3b1;background:#f0f0f0"></div>
<div class="a" style="left:828.5px;top:352.3px;width:1px;height:1px;background:#605e5c;"></div>
<div class="t" style="left:833.00px;top:348.00px;font-size:4.980px;color:#797775;line-height:10px;height:10px;">71% confidence</div>
<div class="a" style="left:813.5px;top:363.5px;width:135px;height:57.50px;background:#fff;box-shadow:0 0.5px 2px rgba(0,0,0,0.2)"></div>
<div class="t s" style="left:819.00px;top:367.00px;font-size:6.246px;color:#2a5bc9;line-height:10px;height:10px;">Wrong item delivered</div>
<div class="t" style="left:819.00px;top:377.40px;font-size:5.971px;color:#504e4c;line-height:10px;height:10px;">Resolved &bull; 9/9/2020 &bull; Hari Priya Thangavel</div>
<div class="t" style="left:819.00px;top:387.50px;font-size:5.971px;color:#504e4c;line-height:10px;height:10px;">Sent return label and set up a new shipment</div>
<div class="t" style="left:819.00px;top:395.00px;font-size:5.971px;color:#504e4c;line-height:10px;height:10px;">for replacement undefined</div>
<div class="a" style="left:819px;top:408.5px;width:124px;height:1px;background:#ededed;"></div>
<div class="a r" style="left:819.5px;top:410.70px;width:5.5px;height:5.5px;border:0.6px solid #b5b3b1;background:#f0f0f0"></div>
<div class="a" style="left:828.5px;top:412.8px;width:1px;height:1px;background:#605e5c;"></div>
<div class="t" style="left:833.00px;top:408.50px;font-size:4.980px;color:#797775;line-height:10px;height:10px;">70% confidence</div>
</body></html>
